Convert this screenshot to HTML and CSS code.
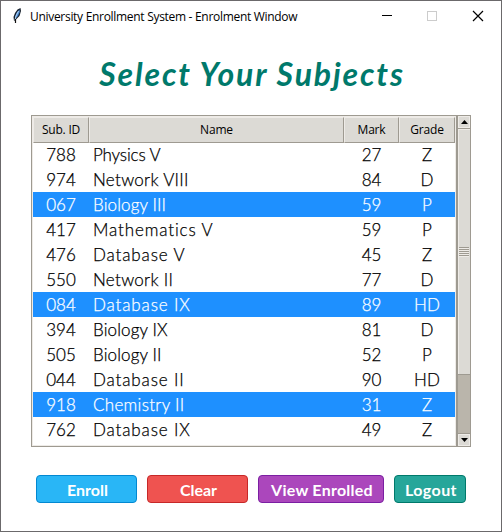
FILE: index.html
```html
<!DOCTYPE html>
<html lang="en">
<head>
<meta charset="utf-8">
<title>University Enrollment System - Enrolment Window</title>
<link rel="stylesheet" href="styles.css">
</head>
<body>
<div class="window">
  <header class="titlebar">
    <svg class="feather" width="12" height="18" viewBox="0 0 12 18"><path d="M3 14 L2.500 10 L4 6 L6.500 2.500 L9.500 1 L10 4 L8.500 9 L5.500 12 Z" fill="#17202c"/><path d="M4 10 L5.500 6 L8.500 2.500 L8.800 5 L7 9 L5 11 Z" fill="#4b8bd4"/><path d="M4 13 L5 9 L7.500 4" fill="none" stroke="#b4d5f5"/><path d="M4.500 16 L4.500 12" stroke="#111" stroke-width="1.200"/></svg>
    <span class="caption">University Enrollment System - Enrolment Window</span>
    <svg class="controls" width="104" height="12" viewBox="0 0 104 12" fill="none"><path d="M0 5.500H10" stroke="#000"/><rect x="45.500" y="1.500" width="9" height="9" stroke="#ccc"/><path d="M91 1L101 11M101 1L91 11" stroke="#000" stroke-width="1.200"/></svg>
  </header>
  <h1>Select Your Subjects</h1>
  <main class="list">
    <div class="tree">
      <div class="row head"><span>Sub. ID</span><span>Name</span><span>Mark</span><span>Grade</span></div>
      <div class="row"><span>788</span><span class="tight">Physics V</span><span>27</span><span>Z</span></div>
      <div class="row"><span>974</span><span>Network VIII</span><span>84</span><span>D</span></div>
      <div class="row selected"><span>067</span><span class="snug">Biology III</span><span>59</span><span>P</span></div>
      <div class="row"><span>417</span><span class="wide">Mathematics V</span><span>59</span><span>P</span></div>
      <div class="row"><span>476</span><span class="wide">Database V</span><span>45</span><span>Z</span></div>
      <div class="row"><span>550</span><span>Network II</span><span>77</span><span>D</span></div>
      <div class="row selected"><span>084</span><span class="wide">Database IX</span><span>89</span><span>HD</span></div>
      <div class="row"><span>394</span><span class="snug">Biology IX</span><span>81</span><span>D</span></div>
      <div class="row"><span>505</span><span class="snug">Biology II</span><span>52</span><span>P</span></div>
      <div class="row"><span>044</span><span class="wide">Database II</span><span>90</span><span>HD</span></div>
      <div class="row selected"><span>918</span><span>Chemistry II</span><span>31</span><span>Z</span></div>
      <div class="row"><span>762</span><span class="wide">Database IX</span><span>49</span><span>Z</span></div>
    </div>
    <div class="scrollbar">
      <div class="arrow"><svg width="7" height="4" viewBox="0 0 7 4"><path d="M3.500 0L7 4H0Z"/></svg></div>
      <div class="thumb"><i class="grip"></i></div>
      <div class="trough"></div>
      <div class="arrow"><svg width="7" height="4" viewBox="0 0 7 4"><path d="M0 0H7L3.500 4Z"/></svg></div>
    </div>
  </main>
  <footer class="actions">
    <button class="enroll">Enroll</button>
    <button class="clear">Clear</button>
    <button class="view">View Enrolled</button>
    <button class="logout">Logout</button>
  </footer>
</div>
</body>
</html>
```
FILE: styles.css
```css
* { box-sizing: border-box; }
body { margin: 0; }
.window {
  width: 502px; height: 532px;
  border: 1px solid #6b696b;
  background: #fff;
  overflow: hidden;
}
.titlebar { display: flex; align-items: center; height: 30px; padding-left: 10px; }
.feather { margin-right: 7px; }
.caption { flex: 1; font: 12px "Open Sans", sans-serif; letter-spacing: -0.3px; white-space: nowrap; }
.controls { margin-right: 15px; }
h1 {
  margin: 0; height: 84px; padding-left: 2px;
  font: italic 700 32px/86px Lato, sans-serif;
  letter-spacing: 1.85px;
  text-align: center; white-space: nowrap;
  color: #00796b;
}
.list { display: flex; height: 332px; margin-left: 30px; }
.tree {
  width: 426px; padding: 1px;
  border: 1px solid #9e9a91;
  box-shadow: inset 0 0 0 1px #eeebe7;
}
.row {
  display: grid; grid-template-columns: 56px 255px 55px 56px;
  height: 25px;
  font: 300 17px/26px Lato, sans-serif;
  -webkit-text-stroke: 0.25px;
  text-align: center; white-space: nowrap;
  color: #000;
}
.row span:nth-child(2) { padding-left: 4px; text-align: left; letter-spacing: 0.3px; }
.row .tight:nth-child(2) { letter-spacing: -0.15px; }
.row .snug:nth-child(2) { letter-spacing: 0.12px; }
.row .wide:nth-child(2) { letter-spacing: 0.87px; }
.head { font: 12px/24px "Open Sans", sans-serif; letter-spacing: -0.2px; -webkit-text-stroke: 0; }
.head span {
  background: #dcdad5;
  border: 1px solid;
  border-color: #eeebe7 #9e9a91 #9e9a91 #eeebe7;
}
.head span:nth-child(2) { padding: 0; text-align: center; letter-spacing: -0.2px; }
.selected { background: #1e90ff; color: #fff; }
.scrollbar {
  display: flex; flex-direction: column;
  width: 14px;
  border: 1px solid #9e9a91;
  background: #bab5ab;
}
.arrow {
  display: flex; align-items: center; justify-content: center;
  height: 12px;
  background: #dcdad5;
  border: 1px solid #eeebe7;
}
.thumb {
  display: flex; align-items: center;
  height: 247px;
  background: #dcdad5;
  border: solid #9e9a91; border-width: 1px 0;
  box-shadow: inset 1px 1px #eeebe7;
}
.grip {
  width: 10px; height: 10px; margin: 0 1px;
  background: repeating-linear-gradient(#9e9a91 0 1px, #eeebe7 1px 2px);
}
.trough { flex: 1; border-bottom: 1px solid #9e9a91; }
.actions { display: flex; gap: 10px; padding: 28px 0 0 35px; }
button {
  height: 28px; padding: 1px 0 0 2px;
  border: 1px solid; border-radius: 4px;
  font: 700 16px/25px Lato, sans-serif;
  color: #fff; white-space: nowrap;
}
.enroll { width: 101px; background: #29b6f6; border-color: #0288d1; }
.clear { width: 101px; background: #ef5350; border-color: #c62828; }
.view { width: 126px; background: #ab47bc; border-color: #7b1fa2; letter-spacing: 0.25px; }
.logout { width: 72px; background: #26a69a; border-color: #00796b; letter-spacing: 0.4px; }
```
